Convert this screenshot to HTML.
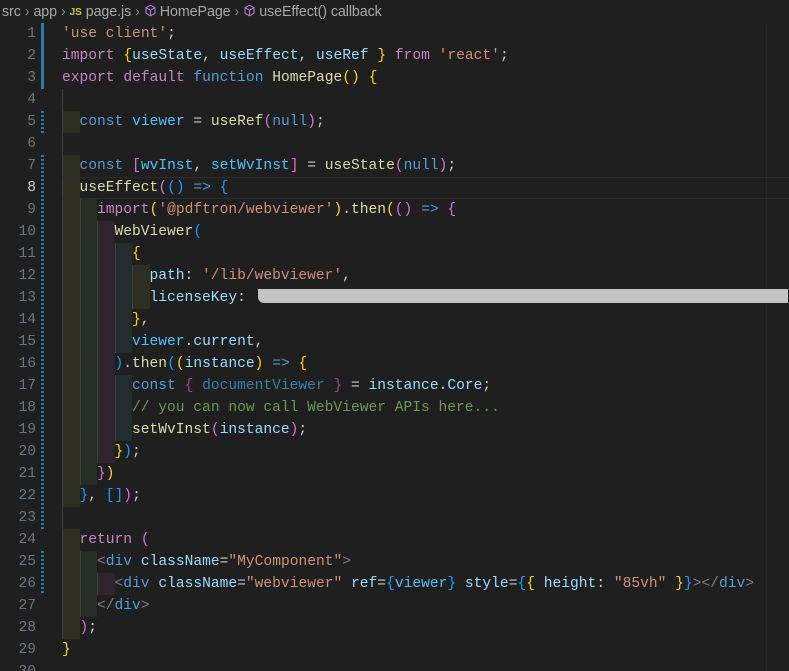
<!DOCTYPE html>
<html><head><meta charset="utf-8"><style>
*{margin:0;padding:0;box-sizing:border-box}
html,body{width:789px;height:671px;overflow:hidden;background:#1f1f1f}
body{position:relative;font-family:"Liberation Mono",monospace;font-size:14.6px;color:#cccccc}
.bc{position:absolute;left:0;top:0;height:23px;width:789px;font-family:"Liberation Sans",sans-serif;font-size:14.3px;color:#a9a9a9;line-height:24px;white-space:nowrap;padding-left:2px;letter-spacing:-0.1px}
.bc .sep{color:#8a8a8a;margin:0 4px}
.js{color:#cbcb41;font-weight:bold;font-size:10px;margin-right:4px;vertical-align:1px}
.cube{display:inline-block;width:13px;height:13px;vertical-align:-1px;margin-right:3px}
.ln{position:absolute;left:0;width:36px;text-align:right;color:#6e7681;height:22px;line-height:22px}
.ln.a{color:#cccccc}
.gb{position:absolute;left:41px;width:3px;background:#1b81a8}
.gd{position:absolute;left:41px;width:3px;background:repeating-linear-gradient(#1b81a8 0 2px,transparent 2px 4px)}
.l{position:absolute;left:62px;height:22px;line-height:22px;white-space:pre;right:0}
.cur{border-top:1px solid #2c2c2c;border-bottom:1px solid #2c2c2c;line-height:20px}
.i{display:inline-block;width:2ch;height:22px;vertical-align:top;border-left:1px solid #404040}
.cur .i{height:20px}
.i1{background:rgba(255,255,64,0.07)}
.i2{background:rgba(127,255,127,0.07)}
.i3{background:rgba(255,127,255,0.07)}
.i4{background:rgba(79,236,236,0.07)}
.g{display:inline-block;width:1px;height:22px;background:#404040;vertical-align:top}
.k{color:#569cd6}.c{color:#c586c0}.s{color:#ce9178}.f{color:#dcdcaa}.v{color:#9cdcfe}.n{color:#4fc1ff}
.cm{color:#6a9955}.y{color:#ffd700}.p{color:#da70d6}.b{color:#179fff}.t{color:#808080}.w{color:#d4d4d4}
.dim{opacity:.6}
.red{position:absolute;left:258px;top:289px;width:530px;height:14px;background:#c4c4c4;border-radius:0 0 0 6px}
.rl{position:absolute;left:766px;top:23px;width:1px;height:648px;background:#262626}
</style></head><body>
<div class="bc">src<span class="sep">›</span>app<span class="sep">›</span><span class="js">JS</span>page.js<span class="sep">›</span><svg class="cube" viewBox="0 0 16 16"><path d="M8 1.5l5.5 3v7L8 14.5l-5.5-3v-7z M2.5 4.5L8 7.5l5.5-3 M8 7.5v7" fill="none" stroke="#b180d7" stroke-width="1.3"/></svg>HomePage<span class="sep">›</span><svg class="cube" viewBox="0 0 16 16"><path d="M8 1.5l5.5 3v7L8 14.5l-5.5-3v-7z M2.5 4.5L8 7.5l5.5-3 M8 7.5v7" fill="none" stroke="#b180d7" stroke-width="1.3"/></svg>useEffect() callback</div>
<div class="rl"></div>

<div class="gb" style="top:23px;height:66px"></div>
<div class="gd" style="top:111px;height:22px"></div>
<div class="gd" style="top:155px;height:374px"></div>
<div class="gd" style="top:551px;height:44px"></div>

<div class="ln" style="top:23px">1</div><div class="ln" style="top:45px">2</div><div class="ln" style="top:67px">3</div><div class="ln" style="top:89px">4</div><div class="ln" style="top:111px">5</div><div class="ln" style="top:133px">6</div><div class="ln" style="top:155px">7</div><div class="ln a" style="top:177px">8</div><div class="ln" style="top:199px">9</div><div class="ln" style="top:221px">10</div><div class="ln" style="top:243px">11</div><div class="ln" style="top:265px">12</div><div class="ln" style="top:287px">13</div><div class="ln" style="top:309px">14</div><div class="ln" style="top:331px">15</div><div class="ln" style="top:353px">16</div><div class="ln" style="top:375px">17</div><div class="ln" style="top:397px">18</div><div class="ln" style="top:419px">19</div><div class="ln" style="top:441px">20</div><div class="ln" style="top:463px">21</div><div class="ln" style="top:485px">22</div><div class="ln" style="top:507px">23</div><div class="ln" style="top:529px">24</div><div class="ln" style="top:551px">25</div><div class="ln" style="top:573px">26</div><div class="ln" style="top:595px">27</div><div class="ln" style="top:617px">28</div><div class="ln" style="top:639px">29</div><div class="ln" style="top:661px">30</div>

<div class="l" style="top:23px"><span class="s">'use client'</span>;</div>
<div class="l" style="top:45px"><span class="c">import</span> <span class="y">{</span><span class="v">useState</span>, <span class="v">useEffect</span>, <span class="v">useRef</span> <span class="y">}</span> <span class="c">from</span> <span class="s">'react'</span>;</div>
<div class="l" style="top:67px"><span class="c">export</span> <span class="c">default</span> <span class="k">function</span> <span class="f">HomePage</span><span class="y">()</span> <span class="y">{</span></div>
<div class="l" style="top:89px"><span class="g"></span></div>
<div class="l" style="top:111px"><span class="i i1"></span><span class="k">const</span> <span class="n">viewer</span> = <span class="f">useRef</span><span class="p">(</span><span class="k">null</span><span class="p">)</span>;</div>
<div class="l" style="top:133px"><span class="g"></span></div>
<div class="l" style="top:155px"><span class="i i1"></span><span class="k">const</span> <span class="p">[</span><span class="n">wvInst</span>, <span class="n">setWvInst</span><span class="p">]</span> = <span class="f">useState</span><span class="p">(</span><span class="k">null</span><span class="p">)</span>;</div>
<div class="l cur" style="top:177px"><span class="i i1"></span><span class="f">useEffect</span><span class="p">(</span><span class="b">()</span> <span class="k">=&gt;</span> <span class="b">{</span></div>
<div class="l" style="top:199px"><span class="i i1"></span><span class="i i2"></span><span class="c">import</span><span class="y">(</span><span class="s">'@pdftron/webviewer'</span><span class="y">)</span>.<span class="f">then</span><span class="y">(</span><span class="p">()</span> <span class="k">=&gt;</span> <span class="p">{</span></div>
<div class="l" style="top:221px"><span class="i i1"></span><span class="i i2"></span><span class="i i3"></span><span class="f">WebViewer</span><span class="b">(</span></div>
<div class="l" style="top:243px"><span class="i i1"></span><span class="i i2"></span><span class="i i3"></span><span class="i i4"></span><span class="y">{</span></div>
<div class="l" style="top:265px"><span class="i i1"></span><span class="i i2"></span><span class="i i3"></span><span class="i i4"></span><span class="i i1"></span><span class="v">path</span>: <span class="s">'/lib/webviewer'</span>,</div>
<div class="l" style="top:287px"><span class="i i1"></span><span class="i i2"></span><span class="i i3"></span><span class="i i4"></span><span class="i i1"></span><span class="v">licenseKey</span>: <span class="s">'</span></div>
<div class="red"></div>
<div class="l" style="top:309px"><span class="i i1"></span><span class="i i2"></span><span class="i i3"></span><span class="i i4"></span><span class="y">}</span>,</div>
<div class="l" style="top:331px"><span class="i i1"></span><span class="i i2"></span><span class="i i3"></span><span class="i i4"></span><span class="n">viewer</span>.<span class="v">current</span>,</div>
<div class="l" style="top:353px"><span class="i i1"></span><span class="i i2"></span><span class="i i3"></span><span class="b">)</span>.<span class="f">then</span><span class="b">(</span><span class="y">(</span><span class="v">instance</span><span class="y">)</span> <span class="k">=&gt;</span> <span class="y">{</span></div>
<div class="l" style="top:375px"><span class="i i1"></span><span class="i i2"></span><span class="i i3"></span><span class="i i4"></span><span class="k">const</span> <span class="p dim">{</span> <span class="n dim">documentViewer</span> <span class="p dim">}</span> = <span class="v">instance</span>.<span class="v">Core</span>;</div>
<div class="l" style="top:397px"><span class="i i1"></span><span class="i i2"></span><span class="i i3"></span><span class="i i4"></span><span class="cm">// you can now call WebViewer APIs here...</span></div>
<div class="l" style="top:419px"><span class="i i1"></span><span class="i i2"></span><span class="i i3"></span><span class="i i4"></span><span class="f">setWvInst</span><span class="p">(</span><span class="v">instance</span><span class="p">)</span>;</div>
<div class="l" style="top:441px"><span class="i i1"></span><span class="i i2"></span><span class="i i3"></span><span class="y">}</span><span class="b">)</span>;</div>
<div class="l" style="top:463px"><span class="i i1"></span><span class="i i2"></span><span class="p">}</span><span class="y">)</span></div>
<div class="l" style="top:485px"><span class="i i1"></span><span class="b">}</span>, <span class="b">[]</span><span class="p">)</span>;</div>
<div class="l" style="top:507px"><span class="g"></span></div>
<div class="l" style="top:529px"><span class="i i1"></span><span class="c">return</span> <span class="p">(</span></div>
<div class="l" style="top:551px"><span class="i i1"></span><span class="i i2"></span><span class="t">&lt;</span><span class="k">div</span> <span class="v">className</span>=<span class="s">"MyComponent"</span><span class="t">&gt;</span></div>
<div class="l" style="top:573px"><span class="i i1"></span><span class="i i2"></span><span class="i i3"></span><span class="t">&lt;</span><span class="k">div</span> <span class="v">className</span>=<span class="s">"webviewer"</span> <span class="v">ref</span>=<span class="b">{</span><span class="n">viewer</span><span class="b">}</span> <span class="v">style</span>=<span class="b">{</span><span class="y">{</span> <span class="v">height</span>: <span class="s">"85vh"</span> <span class="y">}</span><span class="b">}</span><span class="t">&gt;&lt;/</span><span class="k">div</span><span class="t">&gt;</span></div>
<div class="l" style="top:595px"><span class="i i1"></span><span class="i i2"></span><span class="t">&lt;/</span><span class="k">div</span><span class="t">&gt;</span></div>
<div class="l" style="top:617px"><span class="i i1"></span><span class="p">)</span>;</div>
<div class="l" style="top:639px"><span class="y">}</span></div>
</body></html>
